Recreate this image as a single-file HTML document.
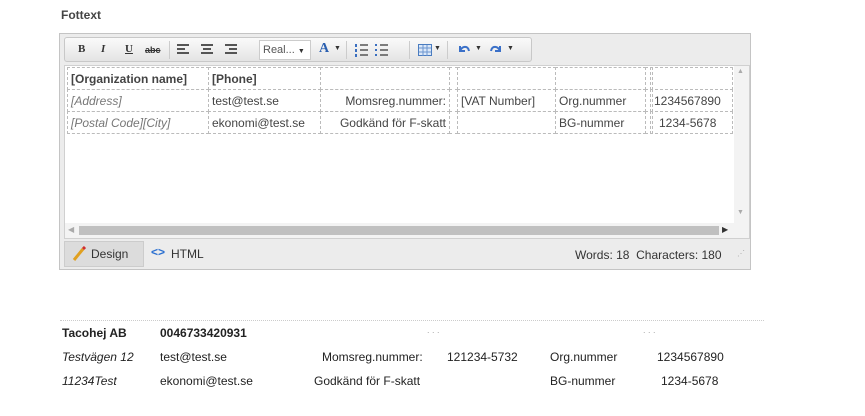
<!DOCTYPE html>
<html><head><meta charset="utf-8"><style>
*{margin:0;padding:0;box-sizing:border-box}
body{width:865px;height:416px;background:#fff;font-family:"Liberation Sans",Arial,sans-serif;position:relative;overflow:hidden;color:#333}
.a{position:absolute;white-space:nowrap}
.ed{position:absolute;left:59px;top:33px;width:692px;height:237px;border:1px solid #c4c4c4;background:#ececec}
.tb{position:absolute;left:4px;top:3px;width:468px;height:25px;border:1px solid #c8c8c8;border-radius:3px;background:linear-gradient(#fafafa,#e4e4e4)}
.ic{position:absolute;top:5px;font-size:11px;color:#333;font-weight:bold}
.sep{position:absolute;top:3px;width:1px;height:18px;background:#ccc}
.ca{position:absolute;left:4px;top:31px;width:686px;height:174px;background:#fff;border:1px solid #d0d0d0}
.td{position:absolute;border:1px dashed #bbb;font-size:12px;color:#444;padding:3px 3px;height:23px;line-height:16px}
.foot{font-size:12px;color:#222}
</style></head><body>
<div class="a" style="left:61px;top:8px;font-size:12px;font-weight:bold;color:#444">Fottext</div>
<div class="ed">
 <div class="tb">
  <span class="ic" style="left:13px;font-family:'Liberation Serif',serif">B</span>
  <span class="ic" style="left:36px;font-style:italic;font-family:'Liberation Serif',serif">I</span>
  <span class="ic" style="left:60px;text-decoration:underline;font-family:'Liberation Serif',serif">U</span>
  <span class="ic" style="left:80px;font-size:9px;top:7px;text-decoration:line-through">abc</span>
  <div class="sep" style="left:104px"></div>
  <svg class="a" style="left:112px;top:6px" width="80" height="12"><g stroke="#555" stroke-width="2"><path d="M0 1h12M0 5h8M0 9h12"/><path d="M24 1h12M26 5h8M24 9h12"/><path d="M48 1h12M52 5h8M48 9h12"/></g></svg>
  <div class="a" style="left:194px;top:2px;width:52px;height:20px;background:#fff;border:1px solid #ccc;font-size:11px;color:#555;padding:3px 3px">Real... <span style="font-size:7px;color:#333">▼</span></div>
  <span class="ic" style="left:254px;top:3px;font-size:14px;color:#2a5fb0;font-family:'Liberation Serif',serif">A</span><span class="ic" style="left:269px;top:7px;font-size:7px">▼</span>
  <div class="sep" style="left:281px"></div>
  <svg class="a" style="left:290px;top:5px" width="50" height="14"><g stroke="#555" stroke-width="1.5"><path d="M5 2h8M5 7h8M5 12h8M25 2h8M25 7h8M25 12h8"/></g><g fill="#3a6fc0"><rect x="0" y="1" width="2" height="3"/><rect x="0" y="6" width="2" height="3"/><rect x="0" y="11" width="2" height="3"/><rect x="20" y="1" width="2" height="2"/><rect x="20" y="6" width="2" height="2"/><rect x="20" y="11" width="2" height="2"/></g></svg>
  <div class="sep" style="left:344px"></div>
  <svg class="a" style="left:353px;top:6px" width="14" height="12"><rect x=".5" y=".5" width="13" height="11" fill="#dbe8f8" stroke="#4a7cc0"/><path d="M1 4h12M1 8h12M5 1v11M9 1v11" stroke="#6b95cf"/></svg>
  <span class="ic" style="left:369px;top:7px;font-size:7px">▼</span>
  <div class="sep" style="left:382px"></div>
  <svg class="a" style="left:392px;top:5px" width="14" height="12"><path d="M3 3v5h5M3 8C5 3 11 2 12 8" fill="none" stroke="#3a70c8" stroke-width="2"/></svg>
  <span class="ic" style="left:410px;top:7px;font-size:7px">▼</span>
  <svg class="a" style="left:424px;top:5px" width="14" height="12"><path d="M11 3v5H6M11 8C9 3 3 2 2 8" fill="none" stroke="#3a70c8" stroke-width="2"/></svg>
  <span class="ic" style="left:442px;top:7px;font-size:7px">▼</span>
 </div>
 <div class="ca">
  <div class="td" style="left:2px;top:1px;width:142px;font-weight:bold">[Organization name]</div>
  <div class="td" style="left:143px;top:1px;width:113px;font-weight:bold">[Phone]</div>
  <div class="td" style="left:255px;top:1px;width:130px"></div>
  <div class="td" style="left:384px;top:1px;width:9px"></div>
  <div class="td" style="left:392px;top:1px;width:99px"></div>
  <div class="td" style="left:490px;top:1px;width:91px"></div>
  <div class="td" style="left:580px;top:1px;width:6px"></div>
  <div class="td" style="left:585px;top:1px;width:83px"></div>

  <div class="td" style="left:2px;top:23px;width:142px;font-style:italic;color:#777">[Address]</div>
  <div class="td" style="left:143px;top:23px;width:113px">test@test.se</div>
  <div class="td" style="left:255px;top:23px;width:130px;text-align:right">Momsreg.nummer:</div>
  <div class="td" style="left:384px;top:23px;width:9px"></div>
  <div class="td" style="left:392px;top:23px;width:99px">[VAT Number]</div>
  <div class="td" style="left:490px;top:23px;width:91px">Org.nummer</div>
  <div class="td" style="left:580px;top:23px;width:6px"></div>
  <div class="td" style="left:585px;top:23px;width:83px">1234567890</div>

  <div class="td" style="left:2px;top:45px;width:142px;font-style:italic;color:#777">[Postal Code][City]</div>
  <div class="td" style="left:143px;top:45px;width:113px">ekonomi@test.se</div>
  <div class="td" style="left:255px;top:45px;width:130px;text-align:right">Godkänd för F-skatt</div>
  <div class="td" style="left:384px;top:45px;width:9px"></div>
  <div class="td" style="left:392px;top:45px;width:99px"></div>
  <div class="td" style="left:490px;top:45px;width:91px">BG-nummer</div>
  <div class="td" style="left:580px;top:45px;width:6px"></div>
  <div class="td" style="left:585px;top:45px;width:83px;padding-left:8px">1234-5678</div>
  <div class="a" style="left:669px;top:0;width:15px;height:157px;background:#f3f3f3"></div>
  <div class="a" style="left:672px;top:2px;font-size:7px;color:#aaa">▲</div>
  <div class="a" style="left:672px;top:143px;font-size:7px;color:#aaa">▼</div>
  <div class="a" style="left:0;top:157px;width:684px;height:15px;background:#f3f3f3"></div>
  <div class="a" style="left:14px;top:160px;width:640px;height:9px;background:#c0c0c0"></div>
  <div class="a" style="left:3px;top:159px;font-size:8px;color:#aaa">◀</div>
  <div class="a" style="left:657px;top:159px;font-size:8px;color:#333">▶</div>
 </div>
 <div class="a" style="left:4px;top:207px;width:80px;height:26px;background:#dcdcdc;border:1px solid #ccc"></div>
 <svg class="a" style="left:12px;top:212px" width="14" height="16"><path d="M2 14L11 3" stroke="#e0a020" stroke-width="3"/><path d="M11 3l2-2" stroke="#d03030" stroke-width="3"/></svg>
 <div class="a" style="left:31px;top:213px;font-size:12px;color:#333">Design</div>
 <div class="a" style="left:91px;top:211px;font-size:12px;font-weight:bold;color:#2a6fd0">&lt;&gt;</div>
 <div class="a" style="left:111px;top:213px;font-size:12px;color:#333">HTML</div>
 <div class="a" style="left:515px;top:214px;font-size:12px;color:#333">Words: 18&nbsp;&nbsp;Characters: 180</div>
 <div class="a" style="left:677px;top:215px;font-size:8px;color:#aaa">⋰</div>
</div>
<div class="a" style="left:60px;top:320px;width:704px;border-top:1px dotted #ccc"></div>
<div class="a foot" style="left:62px;top:326px;font-weight:bold">Tacohej AB</div>
<div class="a foot" style="left:160px;top:326px;font-weight:bold">0046733420931</div>
<div class="a" style="left:427px;top:325px;font-size:9px;color:#aaa">. . .</div>
<div class="a" style="left:643px;top:325px;font-size:9px;color:#aaa">. . .</div>
<div class="a foot" style="left:62px;top:350px;font-style:italic">Testvägen 12</div>
<div class="a foot" style="left:160px;top:350px">test@test.se</div>
<div class="a foot" style="left:322px;top:350px">Momsreg.nummer:</div>
<div class="a foot" style="left:447px;top:350px">121234-5732</div>
<div class="a foot" style="left:550px;top:350px">Org.nummer</div>
<div class="a foot" style="left:657px;top:350px">1234567890</div>
<div class="a foot" style="left:62px;top:374px;font-style:italic">11234Test</div>
<div class="a foot" style="left:160px;top:374px">ekonomi@test.se</div>
<div class="a foot" style="left:314px;top:374px">Godkänd för F-skatt</div>
<div class="a foot" style="left:550px;top:374px">BG-nummer</div>
<div class="a foot" style="left:661px;top:374px">1234-5678</div>
</body></html>
